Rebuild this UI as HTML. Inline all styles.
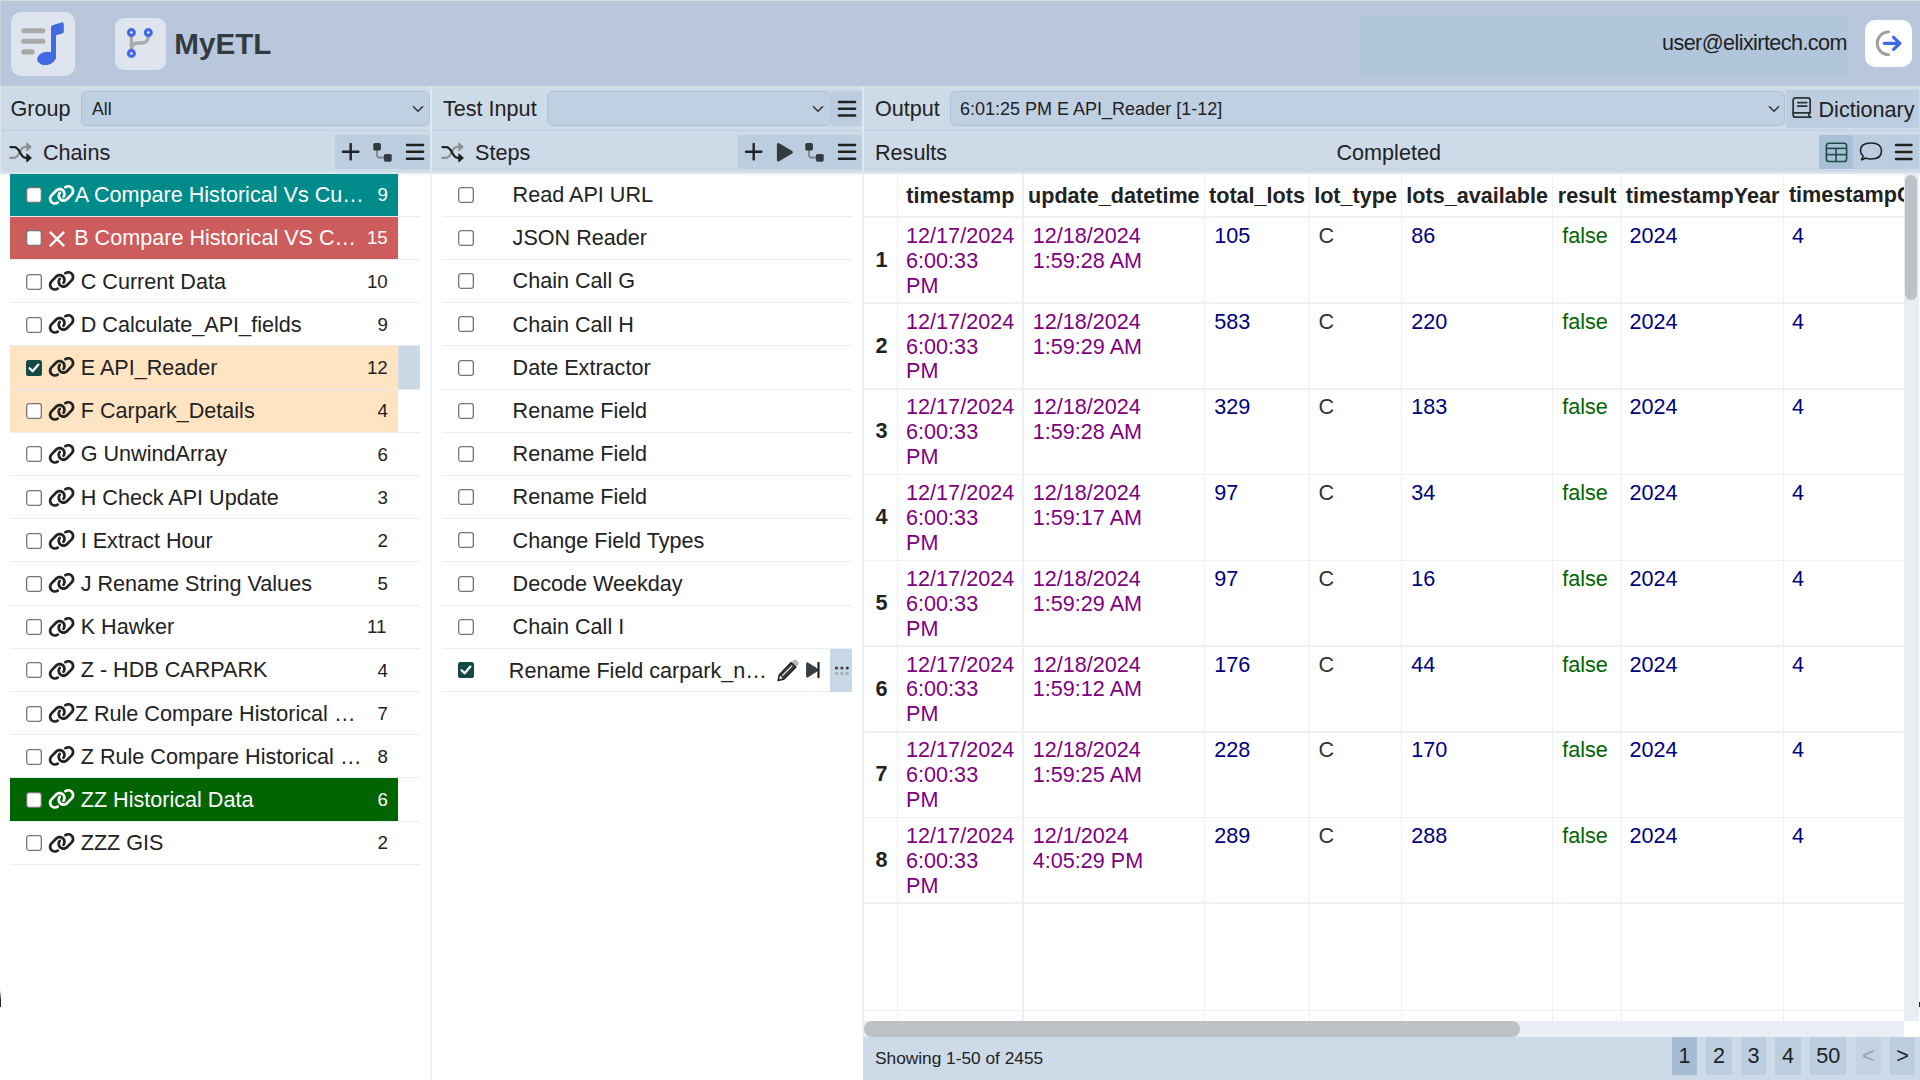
<!DOCTYPE html><html><head><meta charset="utf-8"><style>
*{box-sizing:border-box;margin:0;padding:0}
html,body{width:1920px;height:1080px;overflow:hidden;background:#fff;font-family:"Liberation Sans",sans-serif;color:#222;font-size:21.6px}
div,span,svg{position:absolute}
.t{white-space:nowrap;line-height:25px}
</style></head><body>
<div style="left:0px;top:0px;width:1920px;height:86px;background:#b8c7dc;"></div>
<div style="left:0px;top:0px;width:1920px;height:1px;background:#d9dbdf;"></div>
<div style="left:0px;top:0px;width:1px;height:86px;background:#c8d3e0;"></div>
<div style="left:1360px;top:16px;width:488px;height:61px;background:#b1c5db;"></div>
<div style="left:11px;top:12px;width:64px;height:64px;background:#dfe5ee;border-radius:10px"></div>
<svg style="left:11px;top:12px;" width="64" height="64" viewBox="0 0 64 64"><g stroke="#a9a9a9" stroke-width="5.1" stroke-linecap="round"><line x1="12.8" y1="18.8" x2="31.8" y2="18.8"/><line x1="12.8" y1="29.3" x2="31.8" y2="29.3"/><line x1="12.8" y1="39.9" x2="21" y2="39.9"/></g><path fill="#4169e1" d="M40 46 L40 15.5 Q40 13.8 41.6 13.2 L50.4 10.4 Q52.8 9.7 52.8 12.2 L52.8 19.4 Q52.8 20.9 51.3 21.4 L45 23.3 L45 47 Z"/><ellipse cx="35.4" cy="46.4" rx="9.4" ry="6.6" transform="rotate(-10 35.4 46.4)" fill="#4169e1"/></svg>
<div style="left:115px;top:18px;width:51px;height:52px;background:#dfe5ee;border-radius:9px"></div>
<svg style="left:115px;top:18px;" width="51" height="52" viewBox="0 0 51 52"><g fill="none" stroke="#a9a9a9" stroke-width="3.3" stroke-linecap="round"><line x1="16.4" y1="18" x2="16.4" y2="32"/><path d="M33.3 18 Q33.3 25 27 25 L23 25 Q17.2 25 16.6 30.5"/></g><g fill="#fff" stroke="#4169e1" stroke-width="3.3"><circle cx="16.4" cy="14.6" r="2.9"/><circle cx="33.3" cy="14.6" r="2.9"/><circle cx="16.4" cy="35.4" r="2.9"/></g></svg>
<span class="t" style="left:174.3px;top:27.00px;font-size:29.6px;line-height:34.04px;color:#333a40;font-weight:bold;">MyETL</span>
<span class="t" style="left:1662px;top:31.00px;font-size:21.6px;line-height:24.84px;color:#222;font-weight:normal;letter-spacing:-0.58px">user@elixirtech.com</span>
<div style="left:1865px;top:20px;width:47px;height:47px;background:#fff;border-radius:10px"></div>
<svg style="left:1865px;top:20px;" width="47" height="47" viewBox="0 0 47 47"><path d="M23.6 11.9 A11.4 11.4 0 0 0 23.6 34.7" fill="none" stroke="#a0a0a0" stroke-width="2.9" stroke-linecap="round"/><g fill="none" stroke="#4169e1" stroke-width="3.2" stroke-linecap="round" stroke-linejoin="round"><line x1="19.3" y1="23.3" x2="34.5" y2="23.3"/><path d="M28.6 17.3 L34.8 23.3 L28.6 29.4"/></g></svg>
<div style="left:0px;top:86px;width:1920px;height:87.6px;background:#cddae7;"></div>
<div style="left:0px;top:86px;width:1920px;height:3px;background:#d3dde9;"></div>
<div style="left:0px;top:130px;width:1920px;height:1px;background:#bfcfe1;"></div>
<div style="left:0px;top:172px;width:1920px;height:1.6px;background:#dfe5ee;"></div>
<div style="left:0px;top:86px;width:1px;height:87px;background:#dfe6ee;"></div>
<span class="t" style="left:10.5px;top:97.00px;font-size:21.6px;line-height:24.84px;color:#222;font-weight:normal;">Group</span>
<div style="left:81px;top:91.2px;width:349px;height:35px;background:#bfd0e2;border:1px solid #adc2da;border-radius:6px"></div>
<span class="t" style="left:92px;top:99.00px;font-size:17.6px;line-height:20.24px;color:#222;font-weight:normal;">All</span>
<svg style="left:412px;top:104.9px;" width="12" height="8" viewBox="0 0 12 8"><path d="M1 1.2 L6 6.2 L11 1.2" fill="none" stroke="#333" stroke-width="1.5"/></svg>
<span class="t" style="left:443px;top:97.00px;font-size:21.6px;line-height:24.84px;color:#222;font-weight:normal;">Test Input</span>
<div style="left:547px;top:91.2px;width:284px;height:35px;background:#bfd0e2;border:1px solid #adc2da;border-radius:6px"></div>
<svg style="left:812px;top:104.9px;" width="12" height="8" viewBox="0 0 12 8"><path d="M1 1.2 L6 6.2 L11 1.2" fill="none" stroke="#333" stroke-width="1.5"/></svg>
<div style="left:831px;top:91.2px;width:31px;height:35px;background:#bccde0;"></div>
<svg style="left:836.9px;top:100.2px;" width="20.1" height="17.6" viewBox="0 0 20.1 17.6"><g stroke="#222" stroke-width="2.5" stroke-linecap="round"><line x1="2" y1="2" x2="18.1" y2="2"/><line x1="2" y1="8.8" x2="18.1" y2="8.8"/><line x1="2" y1="15.6" x2="18.1" y2="15.6"/></g></svg>
<span class="t" style="left:875px;top:97.00px;font-size:21.6px;line-height:24.84px;color:#222;font-weight:normal;">Output</span>
<div style="left:950px;top:91.2px;width:835px;height:35px;background:#bfd0e2;border:1px solid #adc2da;border-radius:6px"></div>
<span class="t" style="left:960px;top:99.00px;font-size:18px;line-height:20.7px;color:#222;font-weight:normal;">6:01:25 PM E API_Reader [1-12]</span>
<svg style="left:1767.5px;top:104.8px;" width="12" height="8" viewBox="0 0 12 8"><path d="M1 1.2 L6 6.2 L11 1.2" fill="none" stroke="#333" stroke-width="1.5"/></svg>
<div style="left:1786px;top:89.75px;width:133px;height:38px;background:#bccde0;"></div>
<svg style="left:1791px;top:96px;" width="22" height="24" viewBox="0 0 22 24"><g fill="none" stroke="#2d3236" stroke-width="1.75" stroke-linejoin="round" stroke-linecap="round"><path d="M19.15 16.85 L19.15 4.35 Q19.15 1.85 16.65 1.85 L4.65 1.85 Q2.15 1.85 2.15 4.35 L2.15 18.65 Q2.15 21.15 4.65 21.15 L19.6 21.15"/><line x1="2.15" y1="16.85" x2="19.15" y2="16.85"/><path d="M17.9 17 L17.9 19.6 L19.6 21.15"/><line x1="6.8" y1="6.5" x2="15.7" y2="6.5"/><line x1="6.8" y1="10.2" x2="15.7" y2="10.2"/></g></svg>
<span class="t" style="left:1818.5px;top:98.00px;font-size:21.6px;line-height:24.84px;color:#222;font-weight:normal;">Dictionary</span>
<svg style="left:9px;top:141.5px;" width="24" height="22" viewBox="0 0 24 22"><g fill="none" stroke-width="2.2" stroke-linecap="round" stroke-linejoin="round"><path stroke="#8d9297" d="M1.40 15.90 L4.60 15.90 C7.60 15.90 8.80 13.70 10.00 11.50 C11.60 8.30 12.80 4.90 15.80 4.90 L18.50 4.90"/><path stroke="#222" d="M1.40 5.10 L5.20 5.10 C8.30 5.10 9.60 7.70 11.00 10.30 C12.40 13.10 13.60 15.90 16.60 15.90 L18.50 15.90"/></g><path fill="#8d9297" stroke="#8d9297" stroke-width="1.2" stroke-linejoin="round" d="M17.90 1.20 L22.20 4.90 L17.90 8.60 Z"/><path fill="#222" stroke="#222" stroke-width="1.2" stroke-linejoin="round" d="M17.90 12.20 L22.20 15.90 L17.90 19.60 Z"/></svg>
<span class="t" style="left:43px;top:141.00px;font-size:21.6px;line-height:24.84px;color:#222;font-weight:normal;">Chains</span>
<div style="left:335px;top:135px;width:95px;height:34px;background:#bccde0;"></div>
<svg style="left:341.2px;top:142.3px;" width="19.4" height="19.4" viewBox="0 0 19.4 19.4"><g stroke="#222" stroke-width="2.4" stroke-linecap="round"><line x1="2" y1="9.7" x2="17.4" y2="9.7"/><line x1="9.7" y1="2" x2="9.7" y2="17.4"/></g></svg>
<svg style="left:373.4px;top:142.6px;" width="20" height="20" viewBox="0 0 20 20"><path d="M4 7 L4 12 Q4 14.6 6.6 14.6 L11 14.6" fill="none" stroke="#7b8087" stroke-width="1.7"/><rect x="0.3" y="0" width="7.6" height="7.5" rx="1.6" fill="#333a40"/><rect x="10.9" y="11" width="7.8" height="7.7" rx="1.6" fill="#333a40"/></svg>
<svg style="left:404.65px;top:143.2px;" width="20.1" height="17.7" viewBox="0 0 20.1 17.7"><g stroke="#222" stroke-width="2.5" stroke-linecap="round"><line x1="2" y1="2" x2="18.1" y2="2"/><line x1="2" y1="8.85" x2="18.1" y2="8.85"/><line x1="2" y1="15.7" x2="18.1" y2="15.7"/></g></svg>
<svg style="left:441px;top:141.5px;" width="24" height="22" viewBox="0 0 24 22"><g fill="none" stroke-width="2.2" stroke-linecap="round" stroke-linejoin="round"><path stroke="#8d9297" d="M1.40 15.90 L4.60 15.90 C7.60 15.90 8.80 13.70 10.00 11.50 C11.60 8.30 12.80 4.90 15.80 4.90 L18.50 4.90"/><path stroke="#222" d="M1.40 5.10 L5.20 5.10 C8.30 5.10 9.60 7.70 11.00 10.30 C12.40 13.10 13.60 15.90 16.60 15.90 L18.50 15.90"/></g><path fill="#8d9297" stroke="#8d9297" stroke-width="1.2" stroke-linejoin="round" d="M17.90 1.20 L22.20 4.90 L17.90 8.60 Z"/><path fill="#222" stroke="#222" stroke-width="1.2" stroke-linejoin="round" d="M17.90 12.20 L22.20 15.90 L17.90 19.60 Z"/></svg>
<span class="t" style="left:475px;top:141.00px;font-size:21.6px;line-height:24.84px;color:#222;font-weight:normal;">Steps</span>
<div style="left:738px;top:135px;width:124.5px;height:34px;background:#bccde0;"></div>
<svg style="left:744.0px;top:142.3px;" width="19.4" height="19.4" viewBox="0 0 19.4 19.4"><g stroke="#222" stroke-width="2.4" stroke-linecap="round"><line x1="2" y1="9.7" x2="17.4" y2="9.7"/><line x1="9.7" y1="2" x2="9.7" y2="17.4"/></g></svg>
<svg style="left:775px;top:141.5px;" width="19" height="21" viewBox="0 0 19 21"><path d="M2.5 2.8 Q2.5 1 4.2 2 L16.5 9.2 Q18 10.2 16.5 11.2 L4.2 18.6 Q2.5 19.6 2.5 17.8 Z" fill="#333a40" stroke="#333a40" stroke-width="1.2" stroke-linejoin="round"/></svg>
<svg style="left:805.3px;top:142.8px;" width="20" height="20" viewBox="0 0 20 20"><path d="M4 7 L4 12 Q4 14.6 6.6 14.6 L11 14.6" fill="none" stroke="#7b8087" stroke-width="1.7"/><rect x="0.3" y="0" width="7.6" height="7.5" rx="1.6" fill="#333a40"/><rect x="10.9" y="11" width="7.8" height="7.7" rx="1.6" fill="#333a40"/></svg>
<svg style="left:836.85px;top:143.2px;" width="20.1" height="17.7" viewBox="0 0 20.1 17.7"><g stroke="#222" stroke-width="2.5" stroke-linecap="round"><line x1="2" y1="2" x2="18.1" y2="2"/><line x1="2" y1="8.85" x2="18.1" y2="8.85"/><line x1="2" y1="15.7" x2="18.1" y2="15.7"/></g></svg>
<span class="t" style="left:875px;top:141.00px;font-size:21.6px;line-height:24.84px;color:#222;font-weight:normal;">Results</span>
<span class="t" style="left:1336.5px;top:141.00px;font-size:21.6px;line-height:24.84px;color:#222;font-weight:normal;">Completed</span>
<div style="left:1819px;top:135px;width:34px;height:34px;background:#a9bfd7;"></div>
<div style="left:1853px;top:135px;width:66px;height:34px;background:#bccde0;"></div>
<svg style="left:1824px;top:141px;" width="24" height="22" viewBox="0 0 24 22"><g fill="none" stroke="#1d4d47" stroke-width="1.6"><rect x="2.4" y="2.2" width="20.2" height="18.3" rx="2.6"/><line x1="2.4" y1="7.4" x2="22.6" y2="7.4"/><line x1="2.4" y1="13.6" x2="22.6" y2="13.6"/><line x1="12.1" y1="7.4" x2="12.1" y2="20.5"/></g></svg>
<svg style="left:1858px;top:141px;" width="26" height="22" viewBox="0 0 26 22"><path d="M3.6 18.6 Q4.6 16.6 5.2 15 Q2.5 12.8 2.5 10 Q2.5 2 13 2 Q23.5 2 23.5 10 Q23.5 18 13 18 Q9.5 18 7.4 17 Q5.4 18.3 3.6 18.6 Z" fill="none" stroke="#222" stroke-width="1.6" stroke-linejoin="round"/></svg>
<svg style="left:1894.25px;top:143px;" width="19.5" height="17.9" viewBox="0 0 19.5 17.9"><g stroke="#222" stroke-width="2.5" stroke-linecap="round"><line x1="2" y1="2" x2="17.5" y2="2"/><line x1="2" y1="8.95" x2="17.5" y2="8.95"/><line x1="2" y1="15.9" x2="17.5" y2="15.9"/></g></svg>
<div style="left:430px;top:86px;width:2px;height:87.6px;background:#dfe7ef;"></div>
<div style="left:862px;top:86px;width:1.6px;height:87.6px;background:#dfe7ef;"></div>
<div style="left:430px;top:173.6px;width:1.6px;height:906.4px;background:#eef2f7;"></div>
<div style="left:862px;top:173.6px;width:1.6px;height:863.3px;background:#eef2f7;"></div>
<div style="left:10px;top:215.8px;width:410px;height:1px;background:#e8edf3;"></div>
<div style="left:10px;top:173.6px;width:388.2px;height:42.2px;background:#008b8b;"></div>
<svg style="left:26.3px;top:187.1px;" width="16" height="16" viewBox="0 0 16 16"><rect x="0.65" y="0.65" width="14.7" height="14.7" rx="2.6" fill="#fff" stroke="#767676" stroke-width="1.3"/></svg>
<svg style="left:47.6px;top:183.6px;" width="27.2" height="21.76" viewBox="0 0 640 512"><g fill="#fff"><path d="M579.8 267.7c56.5-56.5 56.5-148 0-204.5c-50-50-128.8-56.5-186.3-15.4l-1.6 1.1c-14.4 10.3-17.7 30.3-7.4 44.6s30.3 17.7 44.6 7.4l1.6-1.1c32.1-22.9 76-19.3 103.8 8.6c31.5 31.5 31.5 82.5 0 114L422.3 334.8c-31.5 31.5-82.5 31.5-114 0c-27.9-27.9-31.5-71.8-8.6-103.8l1.1-1.6c10.3-14.4 6.9-34.4-7.4-44.6s-34.4-6.9-44.6 7.4l-1.1 1.6C206.5 251.2 213 330 263 380c56.5 56.5 148 56.5 204.5 0L579.8 267.7zM60.2 244.3c-56.5 56.5-56.5 148 0 204.5c50 50 128.8 56.5 186.3 15.4l1.6-1.1c14.4-10.3 17.7-30.3 7.4-44.6s-30.3-17.7-44.6-7.4l-1.6 1.1c-32.1 22.9-76 19.3-103.8-8.6C74 372 74 321 105.5 289.5L217.7 177.2c31.5-31.5 82.5-31.5 114 0c27.9 27.9 31.5 71.8 8.6 103.9l-1.1 1.6c-10.3 14.4-6.9 34.4 7.4 44.6s34.4 6.9 44.6-7.4l1.1-1.6C433.5 260.8 427 182 377 132c-56.5-56.5-148-56.5-204.5 0L60.2 244.3z"/></g></svg>
<span class="t" style="left:74.7px;top:183.00px;font-size:21.6px;line-height:24.84px;color:#fff;font-weight:normal;">A Compare Historical Vs Cu…</span>
<span class="t" style="left:377.39168px;top:184.00px;font-size:18.72px;line-height:21.53px;color:#fff;font-weight:normal;">9</span>
<div style="left:10px;top:259.0px;width:410px;height:1px;background:#e8edf3;"></div>
<div style="left:10px;top:216.8px;width:388.2px;height:42.2px;background:#cd5c5c;"></div>
<svg style="left:26.3px;top:230.3px;" width="16" height="16" viewBox="0 0 16 16"><rect x="0.65" y="0.65" width="14.7" height="14.7" rx="2.6" fill="#fff" stroke="#767676" stroke-width="1.3"/></svg>
<svg style="left:48.5px;top:230.8px;" width="16" height="16" viewBox="0 0 16 16"><g stroke="#fff" stroke-width="2.4" stroke-linecap="round"><line x1="1.6" y1="1.6" x2="14.4" y2="14.4"/><line x1="14.4" y1="1.6" x2="1.6" y2="14.4"/></g></svg>
<span class="t" style="left:74.2px;top:226.00px;font-size:21.6px;line-height:24.84px;color:#fff;font-weight:normal;">B Compare Historical VS C…</span>
<span class="t" style="left:366.98336px;top:227.00px;font-size:18.72px;line-height:21.53px;color:#fff;font-weight:normal;">15</span>
<div style="left:10px;top:302.2px;width:410px;height:1px;background:#e8edf3;"></div>
<svg style="left:26.3px;top:273.5px;" width="16" height="16" viewBox="0 0 16 16"><rect x="0.65" y="0.65" width="14.7" height="14.7" rx="2.6" fill="#fff" stroke="#767676" stroke-width="1.3"/></svg>
<svg style="left:47.6px;top:270.0px;" width="27.2" height="21.76" viewBox="0 0 640 512"><g fill="#222"><path d="M579.8 267.7c56.5-56.5 56.5-148 0-204.5c-50-50-128.8-56.5-186.3-15.4l-1.6 1.1c-14.4 10.3-17.7 30.3-7.4 44.6s30.3 17.7 44.6 7.4l1.6-1.1c32.1-22.9 76-19.3 103.8 8.6c31.5 31.5 31.5 82.5 0 114L422.3 334.8c-31.5 31.5-82.5 31.5-114 0c-27.9-27.9-31.5-71.8-8.6-103.8l1.1-1.6c10.3-14.4 6.9-34.4-7.4-44.6s-34.4-6.9-44.6 7.4l-1.1 1.6C206.5 251.2 213 330 263 380c56.5 56.5 148 56.5 204.5 0L579.8 267.7zM60.2 244.3c-56.5 56.5-56.5 148 0 204.5c50 50 128.8 56.5 186.3 15.4l1.6-1.1c14.4-10.3 17.7-30.3 7.4-44.6s-30.3-17.7-44.6-7.4l-1.6 1.1c-32.1 22.9-76 19.3-103.8-8.6C74 372 74 321 105.5 289.5L217.7 177.2c31.5-31.5 82.5-31.5 114 0c27.9 27.9 31.5 71.8 8.6 103.9l-1.1 1.6c-10.3 14.4-6.9 34.4 7.4 44.6s34.4 6.9 44.6-7.4l1.1-1.6C433.5 260.8 427 182 377 132c-56.5-56.5-148-56.5-204.5 0L60.2 244.3z"/></g></svg>
<span class="t" style="left:80.7px;top:270.00px;font-size:21.6px;line-height:24.84px;color:#222;font-weight:normal;">C Current Data</span>
<span class="t" style="left:366.98336px;top:271.00px;font-size:18.72px;line-height:21.53px;color:#222;font-weight:normal;">10</span>
<div style="left:10px;top:345.40000000000003px;width:410px;height:1px;background:#e8edf3;"></div>
<svg style="left:26.3px;top:316.70000000000005px;" width="16" height="16" viewBox="0 0 16 16"><rect x="0.65" y="0.65" width="14.7" height="14.7" rx="2.6" fill="#fff" stroke="#767676" stroke-width="1.3"/></svg>
<svg style="left:47.6px;top:313.20000000000005px;" width="27.2" height="21.76" viewBox="0 0 640 512"><g fill="#222"><path d="M579.8 267.7c56.5-56.5 56.5-148 0-204.5c-50-50-128.8-56.5-186.3-15.4l-1.6 1.1c-14.4 10.3-17.7 30.3-7.4 44.6s30.3 17.7 44.6 7.4l1.6-1.1c32.1-22.9 76-19.3 103.8 8.6c31.5 31.5 31.5 82.5 0 114L422.3 334.8c-31.5 31.5-82.5 31.5-114 0c-27.9-27.9-31.5-71.8-8.6-103.8l1.1-1.6c10.3-14.4 6.9-34.4-7.4-44.6s-34.4-6.9-44.6 7.4l-1.1 1.6C206.5 251.2 213 330 263 380c56.5 56.5 148 56.5 204.5 0L579.8 267.7zM60.2 244.3c-56.5 56.5-56.5 148 0 204.5c50 50 128.8 56.5 186.3 15.4l1.6-1.1c14.4-10.3 17.7-30.3 7.4-44.6s-30.3-17.7-44.6-7.4l-1.6 1.1c-32.1 22.9-76 19.3-103.8-8.6C74 372 74 321 105.5 289.5L217.7 177.2c31.5-31.5 82.5-31.5 114 0c27.9 27.9 31.5 71.8 8.6 103.9l-1.1 1.6c-10.3 14.4-6.9 34.4 7.4 44.6s34.4 6.9 44.6-7.4l1.1-1.6C433.5 260.8 427 182 377 132c-56.5-56.5-148-56.5-204.5 0L60.2 244.3z"/></g></svg>
<span class="t" style="left:80.7px;top:313.00px;font-size:21.6px;line-height:24.84px;color:#222;font-weight:normal;">D Calculate_API_fields</span>
<span class="t" style="left:377.39168px;top:314.00px;font-size:18.72px;line-height:21.53px;color:#222;font-weight:normal;">9</span>
<div style="left:10px;top:388.59999999999997px;width:410px;height:1px;background:#e8edf3;"></div>
<div style="left:10px;top:346.4px;width:388.2px;height:42.2px;background:#ffe4c4;"></div>
<div style="left:398.2px;top:346.4px;width:21.8px;height:42.2px;background:#cbd9e6;"></div>
<svg style="left:26.3px;top:359.9px;" width="16" height="16" viewBox="0 0 16 16"><rect x="0" y="0" width="16" height="16" rx="2.6" fill="#134a45"/><path d="M3.6 8.3 L6.6 11.3 L12.4 4.6" fill="none" stroke="#fff" stroke-width="2.3" stroke-linecap="round" stroke-linejoin="round"/></svg>
<svg style="left:47.6px;top:356.4px;" width="27.2" height="21.76" viewBox="0 0 640 512"><g fill="#222"><path d="M579.8 267.7c56.5-56.5 56.5-148 0-204.5c-50-50-128.8-56.5-186.3-15.4l-1.6 1.1c-14.4 10.3-17.7 30.3-7.4 44.6s30.3 17.7 44.6 7.4l1.6-1.1c32.1-22.9 76-19.3 103.8 8.6c31.5 31.5 31.5 82.5 0 114L422.3 334.8c-31.5 31.5-82.5 31.5-114 0c-27.9-27.9-31.5-71.8-8.6-103.8l1.1-1.6c10.3-14.4 6.9-34.4-7.4-44.6s-34.4-6.9-44.6 7.4l-1.1 1.6C206.5 251.2 213 330 263 380c56.5 56.5 148 56.5 204.5 0L579.8 267.7zM60.2 244.3c-56.5 56.5-56.5 148 0 204.5c50 50 128.8 56.5 186.3 15.4l1.6-1.1c14.4-10.3 17.7-30.3 7.4-44.6s-30.3-17.7-44.6-7.4l-1.6 1.1c-32.1 22.9-76 19.3-103.8-8.6C74 372 74 321 105.5 289.5L217.7 177.2c31.5-31.5 82.5-31.5 114 0c27.9 27.9 31.5 71.8 8.6 103.9l-1.1 1.6c-10.3 14.4-6.9 34.4 7.4 44.6s34.4 6.9 44.6-7.4l1.1-1.6C433.5 260.8 427 182 377 132c-56.5-56.5-148-56.5-204.5 0L60.2 244.3z"/></g></svg>
<span class="t" style="left:80.7px;top:356.00px;font-size:21.6px;line-height:24.84px;color:#222;font-weight:normal;">E API_Reader</span>
<span class="t" style="left:366.98336px;top:357.00px;font-size:18.72px;line-height:21.53px;color:#222;font-weight:normal;">12</span>
<div style="left:10px;top:431.8px;width:410px;height:1px;background:#e8edf3;"></div>
<div style="left:10px;top:389.6px;width:388.2px;height:42.2px;background:#ffe4c4;"></div>
<svg style="left:26.3px;top:403.1px;" width="16" height="16" viewBox="0 0 16 16"><rect x="0.65" y="0.65" width="14.7" height="14.7" rx="2.6" fill="#fff" stroke="#767676" stroke-width="1.3"/></svg>
<svg style="left:47.6px;top:399.6px;" width="27.2" height="21.76" viewBox="0 0 640 512"><g fill="#222"><path d="M579.8 267.7c56.5-56.5 56.5-148 0-204.5c-50-50-128.8-56.5-186.3-15.4l-1.6 1.1c-14.4 10.3-17.7 30.3-7.4 44.6s30.3 17.7 44.6 7.4l1.6-1.1c32.1-22.9 76-19.3 103.8 8.6c31.5 31.5 31.5 82.5 0 114L422.3 334.8c-31.5 31.5-82.5 31.5-114 0c-27.9-27.9-31.5-71.8-8.6-103.8l1.1-1.6c10.3-14.4 6.9-34.4-7.4-44.6s-34.4-6.9-44.6 7.4l-1.1 1.6C206.5 251.2 213 330 263 380c56.5 56.5 148 56.5 204.5 0L579.8 267.7zM60.2 244.3c-56.5 56.5-56.5 148 0 204.5c50 50 128.8 56.5 186.3 15.4l1.6-1.1c14.4-10.3 17.7-30.3 7.4-44.6s-30.3-17.7-44.6-7.4l-1.6 1.1c-32.1 22.9-76 19.3-103.8-8.6C74 372 74 321 105.5 289.5L217.7 177.2c31.5-31.5 82.5-31.5 114 0c27.9 27.9 31.5 71.8 8.6 103.9l-1.1 1.6c-10.3 14.4-6.9 34.4 7.4 44.6s34.4 6.9 44.6-7.4l1.1-1.6C433.5 260.8 427 182 377 132c-56.5-56.5-148-56.5-204.5 0L60.2 244.3z"/></g></svg>
<span class="t" style="left:80.7px;top:399.00px;font-size:21.6px;line-height:24.84px;color:#222;font-weight:normal;">F Carpark_Details</span>
<span class="t" style="left:377.39168px;top:400.00px;font-size:18.72px;line-height:21.53px;color:#222;font-weight:normal;">4</span>
<div style="left:10px;top:475.00000000000006px;width:410px;height:1px;background:#e8edf3;"></div>
<svg style="left:26.3px;top:446.30000000000007px;" width="16" height="16" viewBox="0 0 16 16"><rect x="0.65" y="0.65" width="14.7" height="14.7" rx="2.6" fill="#fff" stroke="#767676" stroke-width="1.3"/></svg>
<svg style="left:47.6px;top:442.80000000000007px;" width="27.2" height="21.76" viewBox="0 0 640 512"><g fill="#222"><path d="M579.8 267.7c56.5-56.5 56.5-148 0-204.5c-50-50-128.8-56.5-186.3-15.4l-1.6 1.1c-14.4 10.3-17.7 30.3-7.4 44.6s30.3 17.7 44.6 7.4l1.6-1.1c32.1-22.9 76-19.3 103.8 8.6c31.5 31.5 31.5 82.5 0 114L422.3 334.8c-31.5 31.5-82.5 31.5-114 0c-27.9-27.9-31.5-71.8-8.6-103.8l1.1-1.6c10.3-14.4 6.9-34.4-7.4-44.6s-34.4-6.9-44.6 7.4l-1.1 1.6C206.5 251.2 213 330 263 380c56.5 56.5 148 56.5 204.5 0L579.8 267.7zM60.2 244.3c-56.5 56.5-56.5 148 0 204.5c50 50 128.8 56.5 186.3 15.4l1.6-1.1c14.4-10.3 17.7-30.3 7.4-44.6s-30.3-17.7-44.6-7.4l-1.6 1.1c-32.1 22.9-76 19.3-103.8-8.6C74 372 74 321 105.5 289.5L217.7 177.2c31.5-31.5 82.5-31.5 114 0c27.9 27.9 31.5 71.8 8.6 103.9l-1.1 1.6c-10.3 14.4-6.9 34.4 7.4 44.6s34.4 6.9 44.6-7.4l1.1-1.6C433.5 260.8 427 182 377 132c-56.5-56.5-148-56.5-204.5 0L60.2 244.3z"/></g></svg>
<span class="t" style="left:80.7px;top:442.00px;font-size:21.6px;line-height:24.84px;color:#222;font-weight:normal;">G UnwindArray</span>
<span class="t" style="left:377.39168px;top:444.00px;font-size:18.72px;line-height:21.53px;color:#222;font-weight:normal;">6</span>
<div style="left:10px;top:518.2px;width:410px;height:1px;background:#e8edf3;"></div>
<svg style="left:26.3px;top:489.5px;" width="16" height="16" viewBox="0 0 16 16"><rect x="0.65" y="0.65" width="14.7" height="14.7" rx="2.6" fill="#fff" stroke="#767676" stroke-width="1.3"/></svg>
<svg style="left:47.6px;top:486.0px;" width="27.2" height="21.76" viewBox="0 0 640 512"><g fill="#222"><path d="M579.8 267.7c56.5-56.5 56.5-148 0-204.5c-50-50-128.8-56.5-186.3-15.4l-1.6 1.1c-14.4 10.3-17.7 30.3-7.4 44.6s30.3 17.7 44.6 7.4l1.6-1.1c32.1-22.9 76-19.3 103.8 8.6c31.5 31.5 31.5 82.5 0 114L422.3 334.8c-31.5 31.5-82.5 31.5-114 0c-27.9-27.9-31.5-71.8-8.6-103.8l1.1-1.6c10.3-14.4 6.9-34.4-7.4-44.6s-34.4-6.9-44.6 7.4l-1.1 1.6C206.5 251.2 213 330 263 380c56.5 56.5 148 56.5 204.5 0L579.8 267.7zM60.2 244.3c-56.5 56.5-56.5 148 0 204.5c50 50 128.8 56.5 186.3 15.4l1.6-1.1c14.4-10.3 17.7-30.3 7.4-44.6s-30.3-17.7-44.6-7.4l-1.6 1.1c-32.1 22.9-76 19.3-103.8-8.6C74 372 74 321 105.5 289.5L217.7 177.2c31.5-31.5 82.5-31.5 114 0c27.9 27.9 31.5 71.8 8.6 103.9l-1.1 1.6c-10.3 14.4-6.9 34.4 7.4 44.6s34.4 6.9 44.6-7.4l1.1-1.6C433.5 260.8 427 182 377 132c-56.5-56.5-148-56.5-204.5 0L60.2 244.3z"/></g></svg>
<span class="t" style="left:80.7px;top:486.00px;font-size:21.6px;line-height:24.84px;color:#222;font-weight:normal;">H Check API Update</span>
<span class="t" style="left:377.39168px;top:487.00px;font-size:18.72px;line-height:21.53px;color:#222;font-weight:normal;">3</span>
<div style="left:10px;top:561.4000000000001px;width:410px;height:1px;background:#e8edf3;"></div>
<svg style="left:26.3px;top:532.7px;" width="16" height="16" viewBox="0 0 16 16"><rect x="0.65" y="0.65" width="14.7" height="14.7" rx="2.6" fill="#fff" stroke="#767676" stroke-width="1.3"/></svg>
<svg style="left:47.6px;top:529.2px;" width="27.2" height="21.76" viewBox="0 0 640 512"><g fill="#222"><path d="M579.8 267.7c56.5-56.5 56.5-148 0-204.5c-50-50-128.8-56.5-186.3-15.4l-1.6 1.1c-14.4 10.3-17.7 30.3-7.4 44.6s30.3 17.7 44.6 7.4l1.6-1.1c32.1-22.9 76-19.3 103.8 8.6c31.5 31.5 31.5 82.5 0 114L422.3 334.8c-31.5 31.5-82.5 31.5-114 0c-27.9-27.9-31.5-71.8-8.6-103.8l1.1-1.6c10.3-14.4 6.9-34.4-7.4-44.6s-34.4-6.9-44.6 7.4l-1.1 1.6C206.5 251.2 213 330 263 380c56.5 56.5 148 56.5 204.5 0L579.8 267.7zM60.2 244.3c-56.5 56.5-56.5 148 0 204.5c50 50 128.8 56.5 186.3 15.4l1.6-1.1c14.4-10.3 17.7-30.3 7.4-44.6s-30.3-17.7-44.6-7.4l-1.6 1.1c-32.1 22.9-76 19.3-103.8-8.6C74 372 74 321 105.5 289.5L217.7 177.2c31.5-31.5 82.5-31.5 114 0c27.9 27.9 31.5 71.8 8.6 103.9l-1.1 1.6c-10.3 14.4-6.9 34.4 7.4 44.6s34.4 6.9 44.6-7.4l1.1-1.6C433.5 260.8 427 182 377 132c-56.5-56.5-148-56.5-204.5 0L60.2 244.3z"/></g></svg>
<span class="t" style="left:80.7px;top:529.00px;font-size:21.6px;line-height:24.84px;color:#222;font-weight:normal;">I Extract Hour</span>
<span class="t" style="left:377.39168px;top:530.00px;font-size:18.72px;line-height:21.53px;color:#222;font-weight:normal;">2</span>
<div style="left:10px;top:604.6px;width:410px;height:1px;background:#e8edf3;"></div>
<svg style="left:26.3px;top:575.9px;" width="16" height="16" viewBox="0 0 16 16"><rect x="0.65" y="0.65" width="14.7" height="14.7" rx="2.6" fill="#fff" stroke="#767676" stroke-width="1.3"/></svg>
<svg style="left:47.6px;top:572.4px;" width="27.2" height="21.76" viewBox="0 0 640 512"><g fill="#222"><path d="M579.8 267.7c56.5-56.5 56.5-148 0-204.5c-50-50-128.8-56.5-186.3-15.4l-1.6 1.1c-14.4 10.3-17.7 30.3-7.4 44.6s30.3 17.7 44.6 7.4l1.6-1.1c32.1-22.9 76-19.3 103.8 8.6c31.5 31.5 31.5 82.5 0 114L422.3 334.8c-31.5 31.5-82.5 31.5-114 0c-27.9-27.9-31.5-71.8-8.6-103.8l1.1-1.6c10.3-14.4 6.9-34.4-7.4-44.6s-34.4-6.9-44.6 7.4l-1.1 1.6C206.5 251.2 213 330 263 380c56.5 56.5 148 56.5 204.5 0L579.8 267.7zM60.2 244.3c-56.5 56.5-56.5 148 0 204.5c50 50 128.8 56.5 186.3 15.4l1.6-1.1c14.4-10.3 17.7-30.3 7.4-44.6s-30.3-17.7-44.6-7.4l-1.6 1.1c-32.1 22.9-76 19.3-103.8-8.6C74 372 74 321 105.5 289.5L217.7 177.2c31.5-31.5 82.5-31.5 114 0c27.9 27.9 31.5 71.8 8.6 103.9l-1.1 1.6c-10.3 14.4-6.9 34.4 7.4 44.6s34.4 6.9 44.6-7.4l1.1-1.6C433.5 260.8 427 182 377 132c-56.5-56.5-148-56.5-204.5 0L60.2 244.3z"/></g></svg>
<span class="t" style="left:80.7px;top:572.00px;font-size:21.6px;line-height:24.84px;color:#222;font-weight:normal;">J Rename String Values</span>
<span class="t" style="left:377.39168px;top:573.00px;font-size:18.72px;line-height:21.53px;color:#222;font-weight:normal;">5</span>
<div style="left:10px;top:647.8000000000001px;width:410px;height:1px;background:#e8edf3;"></div>
<svg style="left:26.3px;top:619.1px;" width="16" height="16" viewBox="0 0 16 16"><rect x="0.65" y="0.65" width="14.7" height="14.7" rx="2.6" fill="#fff" stroke="#767676" stroke-width="1.3"/></svg>
<svg style="left:47.6px;top:615.6px;" width="27.2" height="21.76" viewBox="0 0 640 512"><g fill="#222"><path d="M579.8 267.7c56.5-56.5 56.5-148 0-204.5c-50-50-128.8-56.5-186.3-15.4l-1.6 1.1c-14.4 10.3-17.7 30.3-7.4 44.6s30.3 17.7 44.6 7.4l1.6-1.1c32.1-22.9 76-19.3 103.8 8.6c31.5 31.5 31.5 82.5 0 114L422.3 334.8c-31.5 31.5-82.5 31.5-114 0c-27.9-27.9-31.5-71.8-8.6-103.8l1.1-1.6c10.3-14.4 6.9-34.4-7.4-44.6s-34.4-6.9-44.6 7.4l-1.1 1.6C206.5 251.2 213 330 263 380c56.5 56.5 148 56.5 204.5 0L579.8 267.7zM60.2 244.3c-56.5 56.5-56.5 148 0 204.5c50 50 128.8 56.5 186.3 15.4l1.6-1.1c14.4-10.3 17.7-30.3 7.4-44.6s-30.3-17.7-44.6-7.4l-1.6 1.1c-32.1 22.9-76 19.3-103.8-8.6C74 372 74 321 105.5 289.5L217.7 177.2c31.5-31.5 82.5-31.5 114 0c27.9 27.9 31.5 71.8 8.6 103.9l-1.1 1.6c-10.3 14.4-6.9 34.4 7.4 44.6s34.4 6.9 44.6-7.4l1.1-1.6C433.5 260.8 427 182 377 132c-56.5-56.5-148-56.5-204.5 0L60.2 244.3z"/></g></svg>
<span class="t" style="left:80.7px;top:615.00px;font-size:21.6px;line-height:24.84px;color:#222;font-weight:normal;">K Hawker</span>
<span class="t" style="left:366.98336px;top:616.00px;font-size:18.72px;line-height:21.53px;color:#222;font-weight:normal;">11</span>
<div style="left:10px;top:691.0000000000001px;width:410px;height:1px;background:#e8edf3;"></div>
<svg style="left:26.3px;top:662.3000000000001px;" width="16" height="16" viewBox="0 0 16 16"><rect x="0.65" y="0.65" width="14.7" height="14.7" rx="2.6" fill="#fff" stroke="#767676" stroke-width="1.3"/></svg>
<svg style="left:47.6px;top:658.8000000000001px;" width="27.2" height="21.76" viewBox="0 0 640 512"><g fill="#222"><path d="M579.8 267.7c56.5-56.5 56.5-148 0-204.5c-50-50-128.8-56.5-186.3-15.4l-1.6 1.1c-14.4 10.3-17.7 30.3-7.4 44.6s30.3 17.7 44.6 7.4l1.6-1.1c32.1-22.9 76-19.3 103.8 8.6c31.5 31.5 31.5 82.5 0 114L422.3 334.8c-31.5 31.5-82.5 31.5-114 0c-27.9-27.9-31.5-71.8-8.6-103.8l1.1-1.6c10.3-14.4 6.9-34.4-7.4-44.6s-34.4-6.9-44.6 7.4l-1.1 1.6C206.5 251.2 213 330 263 380c56.5 56.5 148 56.5 204.5 0L579.8 267.7zM60.2 244.3c-56.5 56.5-56.5 148 0 204.5c50 50 128.8 56.5 186.3 15.4l1.6-1.1c14.4-10.3 17.7-30.3 7.4-44.6s-30.3-17.7-44.6-7.4l-1.6 1.1c-32.1 22.9-76 19.3-103.8-8.6C74 372 74 321 105.5 289.5L217.7 177.2c31.5-31.5 82.5-31.5 114 0c27.9 27.9 31.5 71.8 8.6 103.9l-1.1 1.6c-10.3 14.4-6.9 34.4 7.4 44.6s34.4 6.9 44.6-7.4l1.1-1.6C433.5 260.8 427 182 377 132c-56.5-56.5-148-56.5-204.5 0L60.2 244.3z"/></g></svg>
<span class="t" style="left:80.7px;top:658.00px;font-size:21.6px;line-height:24.84px;color:#222;font-weight:normal;">Z - HDB CARPARK</span>
<span class="t" style="left:377.39168px;top:660.00px;font-size:18.72px;line-height:21.53px;color:#222;font-weight:normal;">4</span>
<div style="left:10px;top:734.2000000000002px;width:410px;height:1px;background:#e8edf3;"></div>
<svg style="left:26.3px;top:705.5000000000001px;" width="16" height="16" viewBox="0 0 16 16"><rect x="0.65" y="0.65" width="14.7" height="14.7" rx="2.6" fill="#fff" stroke="#767676" stroke-width="1.3"/></svg>
<svg style="left:47.6px;top:702.0000000000001px;" width="27.2" height="21.76" viewBox="0 0 640 512"><g fill="#222"><path d="M579.8 267.7c56.5-56.5 56.5-148 0-204.5c-50-50-128.8-56.5-186.3-15.4l-1.6 1.1c-14.4 10.3-17.7 30.3-7.4 44.6s30.3 17.7 44.6 7.4l1.6-1.1c32.1-22.9 76-19.3 103.8 8.6c31.5 31.5 31.5 82.5 0 114L422.3 334.8c-31.5 31.5-82.5 31.5-114 0c-27.9-27.9-31.5-71.8-8.6-103.8l1.1-1.6c10.3-14.4 6.9-34.4-7.4-44.6s-34.4-6.9-44.6 7.4l-1.1 1.6C206.5 251.2 213 330 263 380c56.5 56.5 148 56.5 204.5 0L579.8 267.7zM60.2 244.3c-56.5 56.5-56.5 148 0 204.5c50 50 128.8 56.5 186.3 15.4l1.6-1.1c14.4-10.3 17.7-30.3 7.4-44.6s-30.3-17.7-44.6-7.4l-1.6 1.1c-32.1 22.9-76 19.3-103.8-8.6C74 372 74 321 105.5 289.5L217.7 177.2c31.5-31.5 82.5-31.5 114 0c27.9 27.9 31.5 71.8 8.6 103.9l-1.1 1.6c-10.3 14.4-6.9 34.4 7.4 44.6s34.4 6.9 44.6-7.4l1.1-1.6C433.5 260.8 427 182 377 132c-56.5-56.5-148-56.5-204.5 0L60.2 244.3z"/></g></svg>
<span class="t" style="left:74.7px;top:702.00px;font-size:21.6px;line-height:24.84px;color:#222;font-weight:normal;">Z Rule Compare Historical …</span>
<span class="t" style="left:377.39168px;top:703.00px;font-size:18.72px;line-height:21.53px;color:#222;font-weight:normal;">7</span>
<div style="left:10px;top:777.4000000000001px;width:410px;height:1px;background:#e8edf3;"></div>
<svg style="left:26.3px;top:748.7px;" width="16" height="16" viewBox="0 0 16 16"><rect x="0.65" y="0.65" width="14.7" height="14.7" rx="2.6" fill="#fff" stroke="#767676" stroke-width="1.3"/></svg>
<svg style="left:47.6px;top:745.2px;" width="27.2" height="21.76" viewBox="0 0 640 512"><g fill="#222"><path d="M579.8 267.7c56.5-56.5 56.5-148 0-204.5c-50-50-128.8-56.5-186.3-15.4l-1.6 1.1c-14.4 10.3-17.7 30.3-7.4 44.6s30.3 17.7 44.6 7.4l1.6-1.1c32.1-22.9 76-19.3 103.8 8.6c31.5 31.5 31.5 82.5 0 114L422.3 334.8c-31.5 31.5-82.5 31.5-114 0c-27.9-27.9-31.5-71.8-8.6-103.8l1.1-1.6c10.3-14.4 6.9-34.4-7.4-44.6s-34.4-6.9-44.6 7.4l-1.1 1.6C206.5 251.2 213 330 263 380c56.5 56.5 148 56.5 204.5 0L579.8 267.7zM60.2 244.3c-56.5 56.5-56.5 148 0 204.5c50 50 128.8 56.5 186.3 15.4l1.6-1.1c14.4-10.3 17.7-30.3 7.4-44.6s-30.3-17.7-44.6-7.4l-1.6 1.1c-32.1 22.9-76 19.3-103.8-8.6C74 372 74 321 105.5 289.5L217.7 177.2c31.5-31.5 82.5-31.5 114 0c27.9 27.9 31.5 71.8 8.6 103.9l-1.1 1.6c-10.3 14.4-6.9 34.4 7.4 44.6s34.4 6.9 44.6-7.4l1.1-1.6C433.5 260.8 427 182 377 132c-56.5-56.5-148-56.5-204.5 0L60.2 244.3z"/></g></svg>
<span class="t" style="left:80.7px;top:745.00px;font-size:21.6px;line-height:24.84px;color:#222;font-weight:normal;">Z Rule Compare Historical …</span>
<span class="t" style="left:377.39168px;top:746.00px;font-size:18.72px;line-height:21.53px;color:#222;font-weight:normal;">8</span>
<div style="left:10px;top:820.6000000000001px;width:410px;height:1px;background:#e8edf3;"></div>
<div style="left:10px;top:778.4000000000001px;width:388.2px;height:42.2px;background:#006400;"></div>
<svg style="left:26.3px;top:791.9000000000001px;" width="16" height="16" viewBox="0 0 16 16"><rect x="0.65" y="0.65" width="14.7" height="14.7" rx="2.6" fill="#fff" stroke="#767676" stroke-width="1.3"/></svg>
<svg style="left:47.6px;top:788.4000000000001px;" width="27.2" height="21.76" viewBox="0 0 640 512"><g fill="#fff"><path d="M579.8 267.7c56.5-56.5 56.5-148 0-204.5c-50-50-128.8-56.5-186.3-15.4l-1.6 1.1c-14.4 10.3-17.7 30.3-7.4 44.6s30.3 17.7 44.6 7.4l1.6-1.1c32.1-22.9 76-19.3 103.8 8.6c31.5 31.5 31.5 82.5 0 114L422.3 334.8c-31.5 31.5-82.5 31.5-114 0c-27.9-27.9-31.5-71.8-8.6-103.8l1.1-1.6c10.3-14.4 6.9-34.4-7.4-44.6s-34.4-6.9-44.6 7.4l-1.1 1.6C206.5 251.2 213 330 263 380c56.5 56.5 148 56.5 204.5 0L579.8 267.7zM60.2 244.3c-56.5 56.5-56.5 148 0 204.5c50 50 128.8 56.5 186.3 15.4l1.6-1.1c14.4-10.3 17.7-30.3 7.4-44.6s-30.3-17.7-44.6-7.4l-1.6 1.1c-32.1 22.9-76 19.3-103.8-8.6C74 372 74 321 105.5 289.5L217.7 177.2c31.5-31.5 82.5-31.5 114 0c27.9 27.9 31.5 71.8 8.6 103.9l-1.1 1.6c-10.3 14.4-6.9 34.4 7.4 44.6s34.4 6.9 44.6-7.4l1.1-1.6C433.5 260.8 427 182 377 132c-56.5-56.5-148-56.5-204.5 0L60.2 244.3z"/></g></svg>
<span class="t" style="left:80.7px;top:788.00px;font-size:21.6px;line-height:24.84px;color:#fff;font-weight:normal;">ZZ Historical Data</span>
<span class="t" style="left:377.39168px;top:789.00px;font-size:18.72px;line-height:21.53px;color:#fff;font-weight:normal;">6</span>
<div style="left:10px;top:863.8000000000001px;width:410px;height:1px;background:#e8edf3;"></div>
<svg style="left:26.3px;top:835.1px;" width="16" height="16" viewBox="0 0 16 16"><rect x="0.65" y="0.65" width="14.7" height="14.7" rx="2.6" fill="#fff" stroke="#767676" stroke-width="1.3"/></svg>
<svg style="left:47.6px;top:831.6px;" width="27.2" height="21.76" viewBox="0 0 640 512"><g fill="#222"><path d="M579.8 267.7c56.5-56.5 56.5-148 0-204.5c-50-50-128.8-56.5-186.3-15.4l-1.6 1.1c-14.4 10.3-17.7 30.3-7.4 44.6s30.3 17.7 44.6 7.4l1.6-1.1c32.1-22.9 76-19.3 103.8 8.6c31.5 31.5 31.5 82.5 0 114L422.3 334.8c-31.5 31.5-82.5 31.5-114 0c-27.9-27.9-31.5-71.8-8.6-103.8l1.1-1.6c10.3-14.4 6.9-34.4-7.4-44.6s-34.4-6.9-44.6 7.4l-1.1 1.6C206.5 251.2 213 330 263 380c56.5 56.5 148 56.5 204.5 0L579.8 267.7zM60.2 244.3c-56.5 56.5-56.5 148 0 204.5c50 50 128.8 56.5 186.3 15.4l1.6-1.1c14.4-10.3 17.7-30.3 7.4-44.6s-30.3-17.7-44.6-7.4l-1.6 1.1c-32.1 22.9-76 19.3-103.8-8.6C74 372 74 321 105.5 289.5L217.7 177.2c31.5-31.5 82.5-31.5 114 0c27.9 27.9 31.5 71.8 8.6 103.9l-1.1 1.6c-10.3 14.4-6.9 34.4 7.4 44.6s34.4 6.9 44.6-7.4l1.1-1.6C433.5 260.8 427 182 377 132c-56.5-56.5-148-56.5-204.5 0L60.2 244.3z"/></g></svg>
<span class="t" style="left:80.7px;top:831.00px;font-size:21.6px;line-height:24.84px;color:#222;font-weight:normal;">ZZZ GIS</span>
<span class="t" style="left:377.39168px;top:832.00px;font-size:18.72px;line-height:21.53px;color:#222;font-weight:normal;">2</span>
<div style="left:442px;top:215.8px;width:410px;height:1px;background:#e8edf3;"></div>
<svg style="left:458.3px;top:186.79999999999998px;" width="16" height="16" viewBox="0 0 16 16"><rect x="0.65" y="0.65" width="14.7" height="14.7" rx="2.6" fill="#fff" stroke="#767676" stroke-width="1.3"/></svg>
<span class="t" style="left:512.6px;top:183.00px;font-size:21.6px;line-height:24.84px;color:#222;font-weight:normal;">Read API URL</span>
<div style="left:442px;top:259.0px;width:410px;height:1px;background:#e8edf3;"></div>
<svg style="left:458.3px;top:230.0px;" width="16" height="16" viewBox="0 0 16 16"><rect x="0.65" y="0.65" width="14.7" height="14.7" rx="2.6" fill="#fff" stroke="#767676" stroke-width="1.3"/></svg>
<span class="t" style="left:512.6px;top:226.00px;font-size:21.6px;line-height:24.84px;color:#222;font-weight:normal;">JSON Reader</span>
<div style="left:442px;top:302.2px;width:410px;height:1px;background:#e8edf3;"></div>
<svg style="left:458.3px;top:273.2px;" width="16" height="16" viewBox="0 0 16 16"><rect x="0.65" y="0.65" width="14.7" height="14.7" rx="2.6" fill="#fff" stroke="#767676" stroke-width="1.3"/></svg>
<span class="t" style="left:512.6px;top:269.00px;font-size:21.6px;line-height:24.84px;color:#222;font-weight:normal;">Chain Call G</span>
<div style="left:442px;top:345.40000000000003px;width:410px;height:1px;background:#e8edf3;"></div>
<svg style="left:458.3px;top:316.40000000000003px;" width="16" height="16" viewBox="0 0 16 16"><rect x="0.65" y="0.65" width="14.7" height="14.7" rx="2.6" fill="#fff" stroke="#767676" stroke-width="1.3"/></svg>
<span class="t" style="left:512.6px;top:313.00px;font-size:21.6px;line-height:24.84px;color:#222;font-weight:normal;">Chain Call H</span>
<div style="left:442px;top:388.59999999999997px;width:410px;height:1px;background:#e8edf3;"></div>
<svg style="left:458.3px;top:359.59999999999997px;" width="16" height="16" viewBox="0 0 16 16"><rect x="0.65" y="0.65" width="14.7" height="14.7" rx="2.6" fill="#fff" stroke="#767676" stroke-width="1.3"/></svg>
<span class="t" style="left:512.6px;top:356.00px;font-size:21.6px;line-height:24.84px;color:#222;font-weight:normal;">Date Extractor</span>
<div style="left:442px;top:431.8px;width:410px;height:1px;background:#e8edf3;"></div>
<svg style="left:458.3px;top:402.8px;" width="16" height="16" viewBox="0 0 16 16"><rect x="0.65" y="0.65" width="14.7" height="14.7" rx="2.6" fill="#fff" stroke="#767676" stroke-width="1.3"/></svg>
<span class="t" style="left:512.6px;top:399.00px;font-size:21.6px;line-height:24.84px;color:#222;font-weight:normal;">Rename Field</span>
<div style="left:442px;top:475.00000000000006px;width:410px;height:1px;background:#e8edf3;"></div>
<svg style="left:458.3px;top:446.00000000000006px;" width="16" height="16" viewBox="0 0 16 16"><rect x="0.65" y="0.65" width="14.7" height="14.7" rx="2.6" fill="#fff" stroke="#767676" stroke-width="1.3"/></svg>
<span class="t" style="left:512.6px;top:442.00px;font-size:21.6px;line-height:24.84px;color:#222;font-weight:normal;">Rename Field</span>
<div style="left:442px;top:518.2px;width:410px;height:1px;background:#e8edf3;"></div>
<svg style="left:458.3px;top:489.2px;" width="16" height="16" viewBox="0 0 16 16"><rect x="0.65" y="0.65" width="14.7" height="14.7" rx="2.6" fill="#fff" stroke="#767676" stroke-width="1.3"/></svg>
<span class="t" style="left:512.6px;top:485.00px;font-size:21.6px;line-height:24.84px;color:#222;font-weight:normal;">Rename Field</span>
<div style="left:442px;top:561.4000000000001px;width:410px;height:1px;background:#e8edf3;"></div>
<svg style="left:458.3px;top:532.4000000000001px;" width="16" height="16" viewBox="0 0 16 16"><rect x="0.65" y="0.65" width="14.7" height="14.7" rx="2.6" fill="#fff" stroke="#767676" stroke-width="1.3"/></svg>
<span class="t" style="left:512.6px;top:529.00px;font-size:21.6px;line-height:24.84px;color:#222;font-weight:normal;">Change Field Types</span>
<div style="left:442px;top:604.6px;width:410px;height:1px;background:#e8edf3;"></div>
<svg style="left:458.3px;top:575.6px;" width="16" height="16" viewBox="0 0 16 16"><rect x="0.65" y="0.65" width="14.7" height="14.7" rx="2.6" fill="#fff" stroke="#767676" stroke-width="1.3"/></svg>
<span class="t" style="left:512.6px;top:572.00px;font-size:21.6px;line-height:24.84px;color:#222;font-weight:normal;">Decode Weekday</span>
<div style="left:442px;top:647.8000000000001px;width:410px;height:1px;background:#e8edf3;"></div>
<svg style="left:458.3px;top:618.8000000000001px;" width="16" height="16" viewBox="0 0 16 16"><rect x="0.65" y="0.65" width="14.7" height="14.7" rx="2.6" fill="#fff" stroke="#767676" stroke-width="1.3"/></svg>
<span class="t" style="left:512.6px;top:615.00px;font-size:21.6px;line-height:24.84px;color:#222;font-weight:normal;">Chain Call I</span>
<div style="left:442px;top:691.0000000000001px;width:410px;height:1px;background:#e8edf3;"></div>
<svg style="left:458.3px;top:662.0000000000001px;" width="16" height="16" viewBox="0 0 16 16"><rect x="0" y="0" width="16" height="16" rx="2.6" fill="#134a45"/><path d="M3.6 8.3 L6.6 11.3 L12.4 4.6" fill="none" stroke="#fff" stroke-width="2.3" stroke-linecap="round" stroke-linejoin="round"/></svg>
<span class="t" style="left:508.8px;top:659.00px;font-size:21.6px;line-height:24.84px;color:#222;font-weight:normal;">Rename Field carpark_n…</span>
<div style="left:830.4px;top:649.1px;width:21.4px;height:42.9px;background:#c9d8e6;"></div>
<svg style="left:827px;top:663.8000000000001px;" width="28" height="14" viewBox="0 0 28 14"><g fill="#3a3f45"><circle cx="9.5" cy="4" r="1.6"/><circle cx="14.9" cy="4" r="1.6"/><circle cx="20.3" cy="4" r="1.6"/></g><g fill="#a6acb3"><circle cx="9.5" cy="9.4" r="1.6"/><circle cx="14.9" cy="9.4" r="1.6"/><circle cx="20.3" cy="9.4" r="1.6"/></g></svg>
<svg style="left:776px;top:658.3000000000001px;" width="25" height="24" viewBox="0 0 25 24"><path d="M17.5 2.2 Q19 0.8 20.5 2.2 L22.2 3.9 Q23.6 5.4 22.2 6.9 L19.8 9.3 L15.1 4.6 Z" fill="#b8b8b8"/><path d="M15.1 4.6 L19.8 9.3 L7.6 21.4 L2 22.6 L3.2 17 Z" fill="#3a3f45" stroke="#222" stroke-width="1.4" stroke-linejoin="round"/><path d="M4.2 17.8 L6.6 20.2 L3.2 21.3 Z" fill="#fff"/><line x1="6.3" y1="17.6" x2="16.3" y2="7.6" stroke="#fff" stroke-width="1.1"/></svg>
<svg style="left:804px;top:661.1px;" width="18" height="18" viewBox="0 0 18 18"><path d="M2.6 2.6 Q2.6 1.2 3.8 1.9 L13.6 8.1 Q14.6 8.9 13.6 9.7 L3.8 16 Q2.6 16.7 2.6 15.3 Z" fill="#3a3f45" stroke="#3a3f45" stroke-width="1" stroke-linejoin="round"/><line x1="14.5" y1="1.8" x2="14.5" y2="16.2" stroke="#222" stroke-width="2.2" stroke-linecap="round"/></svg>
<div style="left:862.4px;top:173.6px;width:1.6px;height:847.6px;background:#edf1f6;"></div>
<div style="left:896.6px;top:173.6px;width:1.6px;height:847.6px;background:#edf1f6;"></div>
<div style="left:1022.3000000000001px;top:173.6px;width:1.6px;height:847.6px;background:#edf1f6;"></div>
<div style="left:1203.6px;top:173.6px;width:1.6px;height:847.6px;background:#edf1f6;"></div>
<div style="left:1308.6px;top:173.6px;width:1.6px;height:847.6px;background:#edf1f6;"></div>
<div style="left:1400.6999999999998px;top:173.6px;width:1.6px;height:847.6px;background:#edf1f6;"></div>
<div style="left:1551.8999999999999px;top:173.6px;width:1.6px;height:847.6px;background:#edf1f6;"></div>
<div style="left:1620.6px;top:173.6px;width:1.6px;height:847.6px;background:#edf1f6;"></div>
<div style="left:1782.8px;top:173.6px;width:1.6px;height:847.6px;background:#edf1f6;"></div>
<div style="left:863.3px;top:216.2px;width:1041px;height:1.6px;background:#edf1f6;"></div>
<div style="left:863.3px;top:302.3px;width:1041px;height:1.6px;background:#edf1f6;"></div>
<div style="left:863.3px;top:388.04px;width:1041px;height:1.6px;background:#edf1f6;"></div>
<div style="left:863.3px;top:473.78000000000003px;width:1041px;height:1.6px;background:#edf1f6;"></div>
<div style="left:863.3px;top:559.52px;width:1041px;height:1.6px;background:#edf1f6;"></div>
<div style="left:863.3px;top:645.26px;width:1041px;height:1.6px;background:#edf1f6;"></div>
<div style="left:863.3px;top:731.0px;width:1041px;height:1.6px;background:#edf1f6;"></div>
<div style="left:863.3px;top:816.74px;width:1041px;height:1.6px;background:#edf1f6;"></div>
<div style="left:863.3px;top:902.48px;width:1041px;height:1.6px;background:#edf1f6;"></div>
<div style="left:863.3px;top:1009.5px;width:1041px;height:1.6px;background:#edf1f6;"></div>
<span class="t" style="left:897.5px;top:182.5px;width:125.70000000000005px;text-align:center;font-size:21.6px;font-weight:bold;line-height:25px;color:#222">timestamp</span>
<span class="t" style="left:1023.2px;top:182.5px;width:181.29999999999995px;text-align:center;font-size:21.6px;font-weight:bold;line-height:25px;color:#222">update_datetime</span>
<span class="t" style="left:1204.5px;top:182.5px;width:105.0px;text-align:center;font-size:21.6px;font-weight:bold;line-height:25px;color:#222">total_lots</span>
<span class="t" style="left:1309.5px;top:182.5px;width:92.09999999999991px;text-align:center;font-size:21.6px;font-weight:bold;line-height:25px;color:#222">lot_type</span>
<span class="t" style="left:1401.6px;top:182.5px;width:151.20000000000005px;text-align:center;font-size:21.6px;font-weight:bold;line-height:25px;color:#222">lots_available</span>
<span class="t" style="left:1552.8px;top:182.5px;width:68.70000000000005px;text-align:center;font-size:21.6px;font-weight:bold;line-height:25px;color:#222">result</span>
<span class="t" style="left:1621.5px;top:182.5px;width:162.20000000000005px;text-align:center;font-size:21.6px;font-weight:bold;line-height:25px;color:#222">timestampYear</span>
<span class="t" style="left:1788.9px;top:183.00px;font-size:21.6px;line-height:24.84px;color:#222;font-weight:bold;">timestampC</span>
<span class="t" style="left:875.5px;top:248.00px;font-size:21.6px;line-height:24.84px;color:#222;font-weight:bold;">1</span>
<span class="t" style="left:906.1px;top:224.00px;font-size:21.6px;line-height:24.84px;color:#800080;font-weight:normal;">12/17/2024</span>
<span class="t" style="left:906.1px;top:249.00px;font-size:21.6px;line-height:24.84px;color:#800080;font-weight:normal;">6:00:33</span>
<span class="t" style="left:906.1px;top:274.00px;font-size:21.6px;line-height:24.84px;color:#800080;font-weight:normal;">PM</span>
<span class="t" style="left:1032.8px;top:224.00px;font-size:21.6px;line-height:24.84px;color:#800080;font-weight:normal;">12/18/2024</span>
<span class="t" style="left:1032.8px;top:249.00px;font-size:21.6px;line-height:24.84px;color:#800080;font-weight:normal;">1:59:28 AM</span>
<span class="t" style="left:1214.2px;top:224.00px;font-size:21.6px;line-height:24.84px;color:#000080;font-weight:normal;">105</span>
<span class="t" style="left:1318.4px;top:224.00px;font-size:21.6px;line-height:24.84px;color:#333;font-weight:normal;">C</span>
<span class="t" style="left:1411.3px;top:224.00px;font-size:21.6px;line-height:24.84px;color:#000080;font-weight:normal;">86</span>
<span class="t" style="left:1562.2px;top:224.00px;font-size:21.6px;line-height:24.84px;color:#006400;font-weight:normal;">false</span>
<span class="t" style="left:1629.5px;top:224.00px;font-size:21.6px;line-height:24.84px;color:#000080;font-weight:normal;">2024</span>
<span class="t" style="left:1792.0px;top:224.00px;font-size:21.6px;line-height:24.84px;color:#000080;font-weight:normal;">4</span>
<span class="t" style="left:875.5px;top:334.00px;font-size:21.6px;line-height:24.84px;color:#222;font-weight:bold;">2</span>
<span class="t" style="left:906.1px;top:310.00px;font-size:21.6px;line-height:24.84px;color:#800080;font-weight:normal;">12/17/2024</span>
<span class="t" style="left:906.1px;top:335.00px;font-size:21.6px;line-height:24.84px;color:#800080;font-weight:normal;">6:00:33</span>
<span class="t" style="left:906.1px;top:359.00px;font-size:21.6px;line-height:24.84px;color:#800080;font-weight:normal;">PM</span>
<span class="t" style="left:1032.8px;top:310.00px;font-size:21.6px;line-height:24.84px;color:#800080;font-weight:normal;">12/18/2024</span>
<span class="t" style="left:1032.8px;top:335.00px;font-size:21.6px;line-height:24.84px;color:#800080;font-weight:normal;">1:59:29 AM</span>
<span class="t" style="left:1214.2px;top:310.00px;font-size:21.6px;line-height:24.84px;color:#000080;font-weight:normal;">583</span>
<span class="t" style="left:1318.4px;top:310.00px;font-size:21.6px;line-height:24.84px;color:#333;font-weight:normal;">C</span>
<span class="t" style="left:1411.3px;top:310.00px;font-size:21.6px;line-height:24.84px;color:#000080;font-weight:normal;">220</span>
<span class="t" style="left:1562.2px;top:310.00px;font-size:21.6px;line-height:24.84px;color:#006400;font-weight:normal;">false</span>
<span class="t" style="left:1629.5px;top:310.00px;font-size:21.6px;line-height:24.84px;color:#000080;font-weight:normal;">2024</span>
<span class="t" style="left:1792.0px;top:310.00px;font-size:21.6px;line-height:24.84px;color:#000080;font-weight:normal;">4</span>
<span class="t" style="left:875.5px;top:419.00px;font-size:21.6px;line-height:24.84px;color:#222;font-weight:bold;">3</span>
<span class="t" style="left:906.1px;top:395.00px;font-size:21.6px;line-height:24.84px;color:#800080;font-weight:normal;">12/17/2024</span>
<span class="t" style="left:906.1px;top:420.00px;font-size:21.6px;line-height:24.84px;color:#800080;font-weight:normal;">6:00:33</span>
<span class="t" style="left:906.1px;top:445.00px;font-size:21.6px;line-height:24.84px;color:#800080;font-weight:normal;">PM</span>
<span class="t" style="left:1032.8px;top:395.00px;font-size:21.6px;line-height:24.84px;color:#800080;font-weight:normal;">12/18/2024</span>
<span class="t" style="left:1032.8px;top:420.00px;font-size:21.6px;line-height:24.84px;color:#800080;font-weight:normal;">1:59:28 AM</span>
<span class="t" style="left:1214.2px;top:395.00px;font-size:21.6px;line-height:24.84px;color:#000080;font-weight:normal;">329</span>
<span class="t" style="left:1318.4px;top:395.00px;font-size:21.6px;line-height:24.84px;color:#333;font-weight:normal;">C</span>
<span class="t" style="left:1411.3px;top:395.00px;font-size:21.6px;line-height:24.84px;color:#000080;font-weight:normal;">183</span>
<span class="t" style="left:1562.2px;top:395.00px;font-size:21.6px;line-height:24.84px;color:#006400;font-weight:normal;">false</span>
<span class="t" style="left:1629.5px;top:395.00px;font-size:21.6px;line-height:24.84px;color:#000080;font-weight:normal;">2024</span>
<span class="t" style="left:1792.0px;top:395.00px;font-size:21.6px;line-height:24.84px;color:#000080;font-weight:normal;">4</span>
<span class="t" style="left:875.5px;top:505.00px;font-size:21.6px;line-height:24.84px;color:#222;font-weight:bold;">4</span>
<span class="t" style="left:906.1px;top:481.00px;font-size:21.6px;line-height:24.84px;color:#800080;font-weight:normal;">12/17/2024</span>
<span class="t" style="left:906.1px;top:506.00px;font-size:21.6px;line-height:24.84px;color:#800080;font-weight:normal;">6:00:33</span>
<span class="t" style="left:906.1px;top:531.00px;font-size:21.6px;line-height:24.84px;color:#800080;font-weight:normal;">PM</span>
<span class="t" style="left:1032.8px;top:481.00px;font-size:21.6px;line-height:24.84px;color:#800080;font-weight:normal;">12/18/2024</span>
<span class="t" style="left:1032.8px;top:506.00px;font-size:21.6px;line-height:24.84px;color:#800080;font-weight:normal;">1:59:17 AM</span>
<span class="t" style="left:1214.2px;top:481.00px;font-size:21.6px;line-height:24.84px;color:#000080;font-weight:normal;">97</span>
<span class="t" style="left:1318.4px;top:481.00px;font-size:21.6px;line-height:24.84px;color:#333;font-weight:normal;">C</span>
<span class="t" style="left:1411.3px;top:481.00px;font-size:21.6px;line-height:24.84px;color:#000080;font-weight:normal;">34</span>
<span class="t" style="left:1562.2px;top:481.00px;font-size:21.6px;line-height:24.84px;color:#006400;font-weight:normal;">false</span>
<span class="t" style="left:1629.5px;top:481.00px;font-size:21.6px;line-height:24.84px;color:#000080;font-weight:normal;">2024</span>
<span class="t" style="left:1792.0px;top:481.00px;font-size:21.6px;line-height:24.84px;color:#000080;font-weight:normal;">4</span>
<span class="t" style="left:875.5px;top:591.00px;font-size:21.6px;line-height:24.84px;color:#222;font-weight:bold;">5</span>
<span class="t" style="left:906.1px;top:567.00px;font-size:21.6px;line-height:24.84px;color:#800080;font-weight:normal;">12/17/2024</span>
<span class="t" style="left:906.1px;top:592.00px;font-size:21.6px;line-height:24.84px;color:#800080;font-weight:normal;">6:00:33</span>
<span class="t" style="left:906.1px;top:617.00px;font-size:21.6px;line-height:24.84px;color:#800080;font-weight:normal;">PM</span>
<span class="t" style="left:1032.8px;top:567.00px;font-size:21.6px;line-height:24.84px;color:#800080;font-weight:normal;">12/18/2024</span>
<span class="t" style="left:1032.8px;top:592.00px;font-size:21.6px;line-height:24.84px;color:#800080;font-weight:normal;">1:59:29 AM</span>
<span class="t" style="left:1214.2px;top:567.00px;font-size:21.6px;line-height:24.84px;color:#000080;font-weight:normal;">97</span>
<span class="t" style="left:1318.4px;top:567.00px;font-size:21.6px;line-height:24.84px;color:#333;font-weight:normal;">C</span>
<span class="t" style="left:1411.3px;top:567.00px;font-size:21.6px;line-height:24.84px;color:#000080;font-weight:normal;">16</span>
<span class="t" style="left:1562.2px;top:567.00px;font-size:21.6px;line-height:24.84px;color:#006400;font-weight:normal;">false</span>
<span class="t" style="left:1629.5px;top:567.00px;font-size:21.6px;line-height:24.84px;color:#000080;font-weight:normal;">2024</span>
<span class="t" style="left:1792.0px;top:567.00px;font-size:21.6px;line-height:24.84px;color:#000080;font-weight:normal;">4</span>
<span class="t" style="left:875.5px;top:677.00px;font-size:21.6px;line-height:24.84px;color:#222;font-weight:bold;">6</span>
<span class="t" style="left:906.1px;top:653.00px;font-size:21.6px;line-height:24.84px;color:#800080;font-weight:normal;">12/17/2024</span>
<span class="t" style="left:906.1px;top:677.00px;font-size:21.6px;line-height:24.84px;color:#800080;font-weight:normal;">6:00:33</span>
<span class="t" style="left:906.1px;top:702.00px;font-size:21.6px;line-height:24.84px;color:#800080;font-weight:normal;">PM</span>
<span class="t" style="left:1032.8px;top:653.00px;font-size:21.6px;line-height:24.84px;color:#800080;font-weight:normal;">12/18/2024</span>
<span class="t" style="left:1032.8px;top:677.00px;font-size:21.6px;line-height:24.84px;color:#800080;font-weight:normal;">1:59:12 AM</span>
<span class="t" style="left:1214.2px;top:653.00px;font-size:21.6px;line-height:24.84px;color:#000080;font-weight:normal;">176</span>
<span class="t" style="left:1318.4px;top:653.00px;font-size:21.6px;line-height:24.84px;color:#333;font-weight:normal;">C</span>
<span class="t" style="left:1411.3px;top:653.00px;font-size:21.6px;line-height:24.84px;color:#000080;font-weight:normal;">44</span>
<span class="t" style="left:1562.2px;top:653.00px;font-size:21.6px;line-height:24.84px;color:#006400;font-weight:normal;">false</span>
<span class="t" style="left:1629.5px;top:653.00px;font-size:21.6px;line-height:24.84px;color:#000080;font-weight:normal;">2024</span>
<span class="t" style="left:1792.0px;top:653.00px;font-size:21.6px;line-height:24.84px;color:#000080;font-weight:normal;">4</span>
<span class="t" style="left:875.5px;top:762.00px;font-size:21.6px;line-height:24.84px;color:#222;font-weight:bold;">7</span>
<span class="t" style="left:906.1px;top:738.00px;font-size:21.6px;line-height:24.84px;color:#800080;font-weight:normal;">12/17/2024</span>
<span class="t" style="left:906.1px;top:763.00px;font-size:21.6px;line-height:24.84px;color:#800080;font-weight:normal;">6:00:33</span>
<span class="t" style="left:906.1px;top:788.00px;font-size:21.6px;line-height:24.84px;color:#800080;font-weight:normal;">PM</span>
<span class="t" style="left:1032.8px;top:738.00px;font-size:21.6px;line-height:24.84px;color:#800080;font-weight:normal;">12/18/2024</span>
<span class="t" style="left:1032.8px;top:763.00px;font-size:21.6px;line-height:24.84px;color:#800080;font-weight:normal;">1:59:25 AM</span>
<span class="t" style="left:1214.2px;top:738.00px;font-size:21.6px;line-height:24.84px;color:#000080;font-weight:normal;">228</span>
<span class="t" style="left:1318.4px;top:738.00px;font-size:21.6px;line-height:24.84px;color:#333;font-weight:normal;">C</span>
<span class="t" style="left:1411.3px;top:738.00px;font-size:21.6px;line-height:24.84px;color:#000080;font-weight:normal;">170</span>
<span class="t" style="left:1562.2px;top:738.00px;font-size:21.6px;line-height:24.84px;color:#006400;font-weight:normal;">false</span>
<span class="t" style="left:1629.5px;top:738.00px;font-size:21.6px;line-height:24.84px;color:#000080;font-weight:normal;">2024</span>
<span class="t" style="left:1792.0px;top:738.00px;font-size:21.6px;line-height:24.84px;color:#000080;font-weight:normal;">4</span>
<span class="t" style="left:875.5px;top:848.00px;font-size:21.6px;line-height:24.84px;color:#222;font-weight:bold;">8</span>
<span class="t" style="left:906.1px;top:824.00px;font-size:21.6px;line-height:24.84px;color:#800080;font-weight:normal;">12/17/2024</span>
<span class="t" style="left:906.1px;top:849.00px;font-size:21.6px;line-height:24.84px;color:#800080;font-weight:normal;">6:00:33</span>
<span class="t" style="left:906.1px;top:874.00px;font-size:21.6px;line-height:24.84px;color:#800080;font-weight:normal;">PM</span>
<span class="t" style="left:1032.8px;top:824.00px;font-size:21.6px;line-height:24.84px;color:#800080;font-weight:normal;">12/1/2024</span>
<span class="t" style="left:1032.8px;top:849.00px;font-size:21.6px;line-height:24.84px;color:#800080;font-weight:normal;">4:05:29 PM</span>
<span class="t" style="left:1214.2px;top:824.00px;font-size:21.6px;line-height:24.84px;color:#000080;font-weight:normal;">289</span>
<span class="t" style="left:1318.4px;top:824.00px;font-size:21.6px;line-height:24.84px;color:#333;font-weight:normal;">C</span>
<span class="t" style="left:1411.3px;top:824.00px;font-size:21.6px;line-height:24.84px;color:#000080;font-weight:normal;">288</span>
<span class="t" style="left:1562.2px;top:824.00px;font-size:21.6px;line-height:24.84px;color:#006400;font-weight:normal;">false</span>
<span class="t" style="left:1629.5px;top:824.00px;font-size:21.6px;line-height:24.84px;color:#000080;font-weight:normal;">2024</span>
<span class="t" style="left:1792.0px;top:824.00px;font-size:21.6px;line-height:24.84px;color:#000080;font-weight:normal;">4</span>
<div style="left:1904px;top:173.6px;width:16px;height:847.6px;background:#e9eef5;"></div>
<div style="left:1904.7px;top:174.8px;width:12.5px;height:125.5px;background:#bec1c6;border-radius:6.5px"></div>
<div style="left:1919px;top:173.6px;width:1px;height:864px;background:#fbfcfd;"></div>
<div style="left:863.3px;top:1021.2px;width:1041px;height:15.7px;background:#e9eef5;"></div>
<div style="left:864px;top:1021.2px;width:656px;height:15.7px;background:#bec1c6;border-radius:8px"></div>
<div style="left:1904px;top:1021.2px;width:16px;height:16px;background:#ffffff;"></div>
<div style="left:863.3px;top:1036.9px;width:1056.7px;height:43.1px;background:#cddae7;"></div>
<span class="t" style="left:875px;top:1049.00px;font-size:17.3px;line-height:19.89px;color:#222;font-weight:normal;">Showing 1-50 of 2455</span>
<div style="left:1672px;top:1036.9px;width:24.90000000000009px;height:37.7px;background:#a6bcd4;"></div>
<span class="t" style="left:1672px;top:1043px;width:24.90000000000009px;text-align:center;font-size:21.6px;line-height:25px;color:#222">1</span>
<div style="left:1706.25px;top:1036.9px;width:25.34999999999991px;height:37.7px;background:#bccde0;"></div>
<span class="t" style="left:1706.25px;top:1043px;width:25.34999999999991px;text-align:center;font-size:21.6px;line-height:25px;color:#222">2</span>
<div style="left:1741px;top:1036.9px;width:24.90000000000009px;height:37.7px;background:#bccde0;"></div>
<span class="t" style="left:1741px;top:1043px;width:24.90000000000009px;text-align:center;font-size:21.6px;line-height:25px;color:#222">3</span>
<div style="left:1775.3px;top:1036.9px;width:25.299999999999955px;height:37.7px;background:#bccde0;"></div>
<span class="t" style="left:1775.3px;top:1043px;width:25.299999999999955px;text-align:center;font-size:21.6px;line-height:25px;color:#222">4</span>
<div style="left:1810px;top:1036.9px;width:36.299999999999955px;height:37.7px;background:#bccde0;"></div>
<span class="t" style="left:1810px;top:1043px;width:36.299999999999955px;text-align:center;font-size:21.6px;line-height:25px;color:#222">50</span>
<div style="left:1855.9px;top:1036.9px;width:24.699999999999818px;height:37.7px;background:#c3d3e3;"></div>
<span class="t" style="left:1855.9px;top:1043px;width:24.699999999999818px;text-align:center;font-size:21.6px;line-height:25px;color:#9aa3ad">&lt;</span>
<div style="left:1890px;top:1036.9px;width:25.299999999999955px;height:37.7px;background:#bccde0;"></div>
<span class="t" style="left:1890px;top:1043px;width:25.299999999999955px;text-align:center;font-size:21.6px;line-height:25px;color:#222">&gt;</span>
<div style="left:0px;top:990px;width:1.2px;height:8.5px;background:linear-gradient(#fff,#444);"></div>
<div style="left:0px;top:998.5px;width:1.2px;height:8.2px;background:#222;"></div>
<div style="left:1919px;top:1002px;width:1px;height:4.7px;background:#222;"></div>
</body></html>
